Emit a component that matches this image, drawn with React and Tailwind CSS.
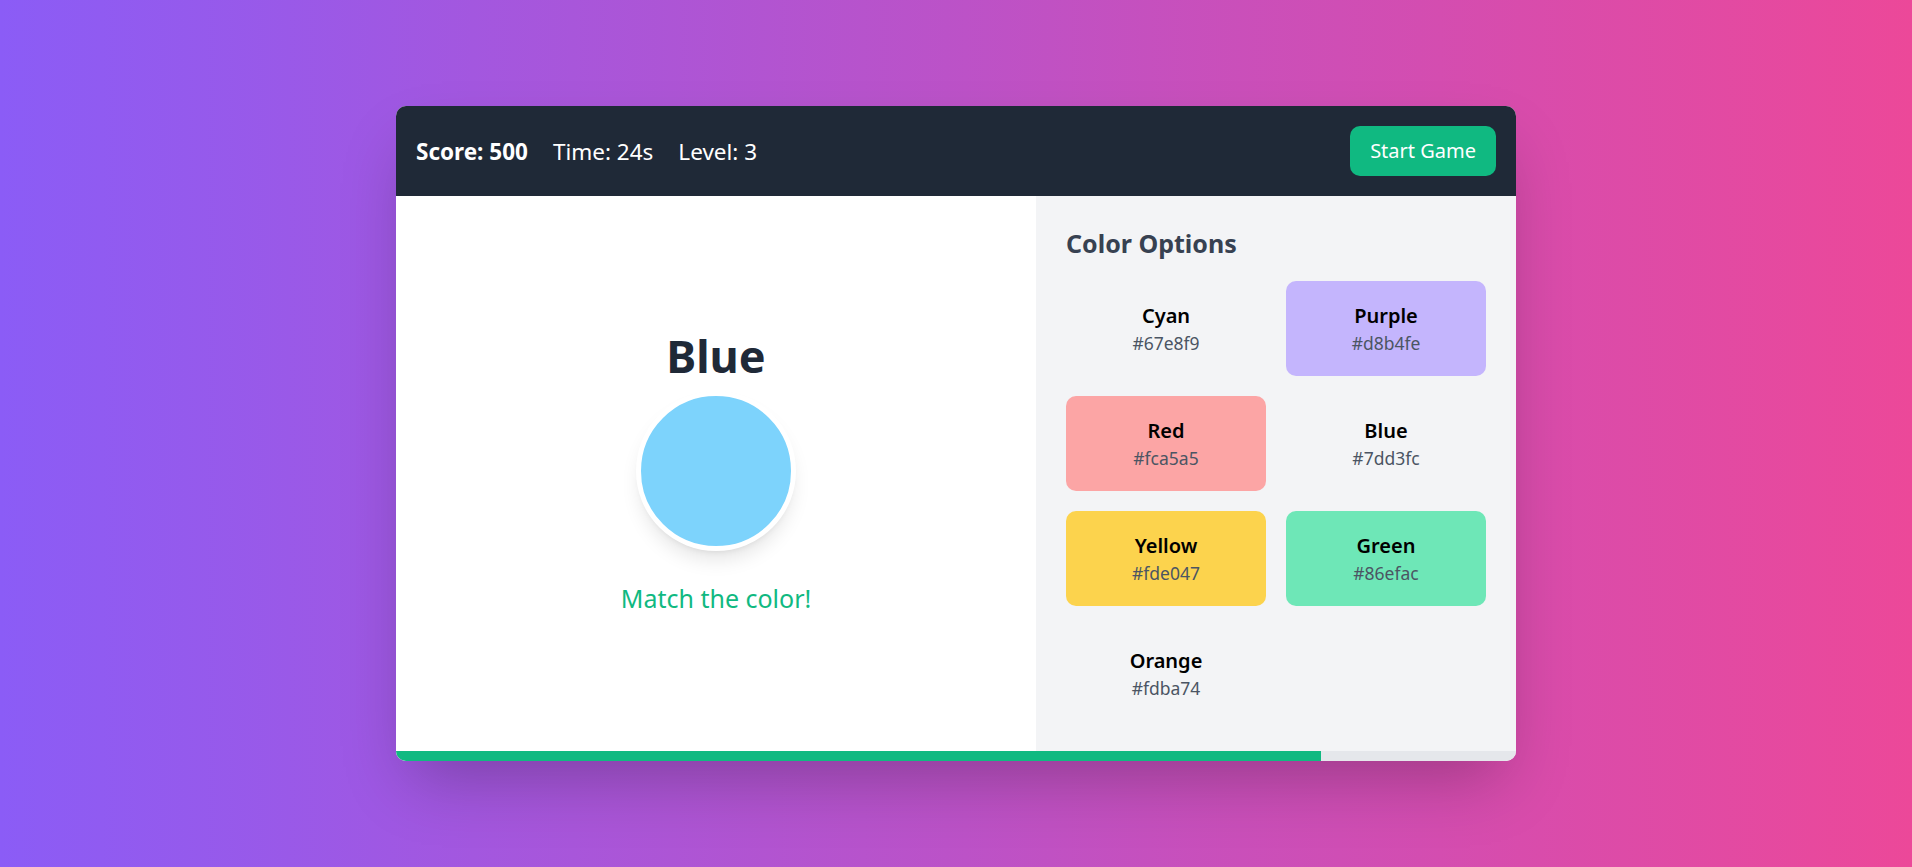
import React from 'react';

const OPTIONS = [
  { name: 'Cyan',   hex: '#67e8f9', bg: '' },
  { name: 'Purple', hex: '#d8b4fe', bg: 'bg-[#c4b5fd]' },
  { name: 'Red',    hex: '#fca5a5', bg: 'bg-[#fca5a5]' },
  { name: 'Blue',   hex: '#7dd3fc', bg: '' },
  { name: 'Yellow', hex: '#fde047', bg: 'bg-[#fcd34d]' },
  { name: 'Green',  hex: '#86efac', bg: 'bg-[#6ee7b7]' },
  { name: 'Orange', hex: '#fdba74', bg: '' },
];

export default function App() {
  const progress = 82.6;

  return (
    <div className="min-h-screen w-full flex items-center justify-center bg-linear-to-r/srgb from-[#8b5cf6] to-[#ec4899] font-['Noto_Sans',sans-serif]">
      <div className="[zoom:1.25] w-full max-w-4xl bg-white rounded-lg shadow-2xl overflow-hidden">
        {/* Header */}
        <div className="flex items-center justify-between bg-[#1f2937] text-white p-4">
          <div className="flex items-center gap-5 text-lg">
            <span className="font-bold">Score: 500</span>
            <span>Time: 24s</span>
            <span>Level: 3</span>
          </div>
          <button className="bg-[#10b981] hover:bg-[#059669] text-white text-base px-4 py-2 rounded-lg">
            Start Game
          </button>
        </div>

        {/* Body */}
        <div className="flex">
          <div className="flex-1 flex flex-col items-center justify-center">
            <h2 className="text-4xl font-bold text-[#1f2937] mb-2">Blue</h2>
            <div className="w-32 h-32 rounded-full border-4 border-white shadow-lg bg-[#7dd3fc]" />
            <p className="mt-6 text-xl text-[#10b981]">Match the color!</p>
          </div>

          <div className="w-96 bg-[#f3f4f6] p-6">
            <h3 className="text-xl font-bold text-[#374151] mb-4">Color Options</h3>
            <div className="grid grid-cols-2 gap-4">
              {OPTIONS.map(o => (
                <div key={o.name} className={`rounded-lg p-4 text-center ${o.bg}`}>
                  <p className="text-base font-semibold text-black">{o.name}</p>
                  <p className="text-sm text-[#4b5563]">{o.hex}</p>
                </div>
              ))}
            </div>
          </div>
        </div>

        {/* Progress */}
        <div className="h-2 bg-[#e5e7eb]">
          <div className="h-full bg-[#10b981]" style={{ width: `${progress}%` }} />
        </div>
      </div>
    </div>
  );
}
